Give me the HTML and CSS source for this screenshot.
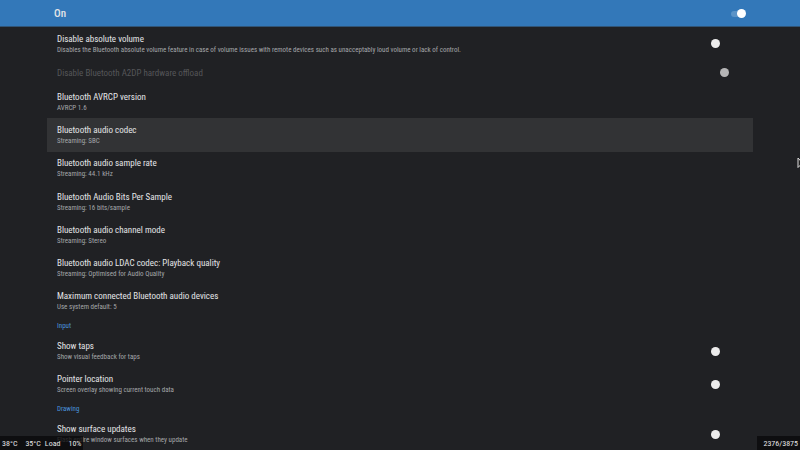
FILE: index.html
```html
<!DOCTYPE html>
<html lang="en">
<head>
    <meta charset="UTF-8">
    <meta name="viewport" content="width=device-width, initial-scale=1.0">
    <title>Developer options</title>
    <link rel="stylesheet" href="styles.css">
</head>
<body>
    <header class="master-bar">
        <label class="master-label" for="masterSwitch">On</label>
        <input type="checkbox" class="switch master-switch" id="masterSwitch" checked>
    </header>

    <main class="settings">
        <div class="row">
            <label class="text" for="absoluteVolume">
                <span class="title">Disable absolute volume</span>
                <span class="summary">Disables the Bluetooth absolute volume feature in case of volume issues with remote devices such as unacceptably loud volume or lack of control.</span>
            </label>
            <input type="checkbox" class="switch" id="absoluteVolume">
        </div>
        <div class="row single disabled">
            <label class="text" for="hardwareOffload">
                <span class="title">Disable Bluetooth A2DP hardware offload</span>
            </label>
            <input type="checkbox" class="switch" id="hardwareOffload" checked disabled>
        </div>
        <button type="button" class="row">
            <span class="text">
                <span class="title">Bluetooth AVRCP version</span>
                <span class="summary">AVRCP 1.6</span>
            </span>
        </button>
        <button type="button" class="row selected">
            <span class="text">
                <span class="title">Bluetooth audio codec</span>
                <span class="summary">Streaming: SBC</span>
            </span>
        </button>
        <button type="button" class="row">
            <span class="text">
                <span class="title">Bluetooth audio sample rate</span>
                <span class="summary">Streaming: 44.1 kHz</span>
            </span>
        </button>
        <button type="button" class="row">
            <span class="text">
                <span class="title">Bluetooth Audio Bits Per Sample</span>
                <span class="summary">Streaming: 16 bits/sample</span>
            </span>
        </button>
        <button type="button" class="row">
            <span class="text">
                <span class="title">Bluetooth audio channel mode</span>
                <span class="summary">Streaming: Stereo</span>
            </span>
        </button>
        <button type="button" class="row">
            <span class="text">
                <span class="title">Bluetooth audio LDAC codec: Playback quality</span>
                <span class="summary">Streaming: Optimised for Audio Quality</span>
            </span>
        </button>
        <button type="button" class="row">
            <span class="text">
                <span class="title">Maximum connected Bluetooth audio devices</span>
                <span class="summary">Use system default: 5</span>
            </span>
        </button>

        <h2 class="category">Input</h2>
        <div class="row">
            <label class="text" for="showTaps">
                <span class="title">Show taps</span>
                <span class="summary">Show visual feedback for taps</span>
            </label>
            <input type="checkbox" class="switch" id="showTaps">
        </div>
        <div class="row">
            <label class="text" for="pointerLocation">
                <span class="title">Pointer location</span>
                <span class="summary">Screen overlay showing current touch data</span>
            </label>
            <input type="checkbox" class="switch" id="pointerLocation">
        </div>

        <h2 class="category">Drawing</h2>
        <div class="row">
            <label class="text" for="surfaceUpdates">
                <span class="title">Show surface updates</span>
                <span class="summary">Flash entire window surfaces when they update</span>
            </label>
            <input type="checkbox" class="switch" id="surfaceUpdates">
        </div>
    </main>

    <!-- System monitor overlays -->
    <div class="overlay stats">
        <span>38°C</span>
        <span class="cpu"><span>35°C</span><span>Load</span></span>
        <span>10%</span>
    </div>
    <div class="overlay memory">2376/3875</div>

    <svg class="cursor" width="8" height="12" viewBox="0 0 8 12">
        <path d="M1 1v9.500l2.500-2.500h3.800z" fill="#222" stroke="#ddd"/>
    </svg>
</body>
</html>
```
FILE: styles.css
```css
:root {
    --blue: #3378b9;
    --background: #202124;
    --selected: #323335;
    --text: #e4e5e7;
    --muted: #a4a6a9;
    --accent: #4a94dc;
}

* {
    box-sizing: border-box;
}

body {
    position: relative;
    display: flex;
    flex-direction: column;
    height: 100vh;
    margin: 0;
    overflow: hidden;
    background-color: var(--background);
    color: var(--text);
    font-family: "Roboto Condensed", Roboto, sans-serif;
}

.master-bar {
    display: flex;
    flex: none;
    align-items: center;
    justify-content: space-between;
    height: 27px;
    padding: 0 54px;
    background-color: var(--blue);
    border-bottom: 1px solid #305476;
}

.master-label {
    font-size: 11px;
    font-weight: 500;
}

/* Rows share the height: 4 parts each, 3 for one line, 2 for a heading */
.settings {
    display: flex;
    flex: 1;
    flex-direction: column;
    margin-bottom: -1px;
    padding: 0 47px;
}

.row {
    display: flex;
    flex: 4 0 0;
    align-items: center;
    justify-content: space-between;
    padding: 0 24px 0 10px;
    border: none;
    background: none;
    color: inherit;
    font-family: inherit;
    text-align: left;
}

.row.single {
    flex-grow: 3;
}

.row.selected {
    background-color: var(--selected);
}

.text {
    display: flex;
    flex-direction: column;
    padding-top: 2px;
}

.title {
    font-size: 9px;
    line-height: 11px;
}

.summary {
    color: var(--muted);
    font-size: 7px;
    line-height: 11px;
}

.disabled .title {
    color: #555659;
}

.category {
    display: flex;
    flex: 2 0 0;
    align-items: center;
    margin: 0;
    padding-left: 10px;
    color: var(--accent);
    font-size: 7px;
    font-weight: 400;
    line-height: 11px;
}

.switch {
    position: relative;
    flex: none;
    width: 18px;
    height: 9px;
    margin: 0;
    appearance: none;
}

.switch::after {
    content: "";
    position: absolute;
    top: 0;
    left: 0;
    width: 9px;
    height: 9px;
    border-radius: 50%;
    background-color: #ececec;
}

.switch:checked::after {
    left: 9px;
}

.switch:disabled::after {
    background-color: #b5b5b6;
}

.master-switch::before {
    content: "";
    position: absolute;
    top: 2px;
    right: 1px;
    width: 14px;
    height: 6px;
    border-radius: 3px;
    background-color: #5b93c7;
}

.master-switch::after {
    background-color: #fff;
}

.overlay {
    position: absolute;
    bottom: 0;
    display: flex;
    align-items: center;
    height: 14px;
    background-color: rgba(10, 10, 11, 0.8);
    font-size: 8px;
}

.stats {
    left: 0;
    gap: 8px;
    padding: 0 2px;
}

.cpu {
    display: flex;
    gap: 4px;
}

.memory {
    right: 0;
    padding: 0 2px 0 6px;
}

.cursor {
    position: absolute;
    top: 157px;
    right: -5px;
}
```
